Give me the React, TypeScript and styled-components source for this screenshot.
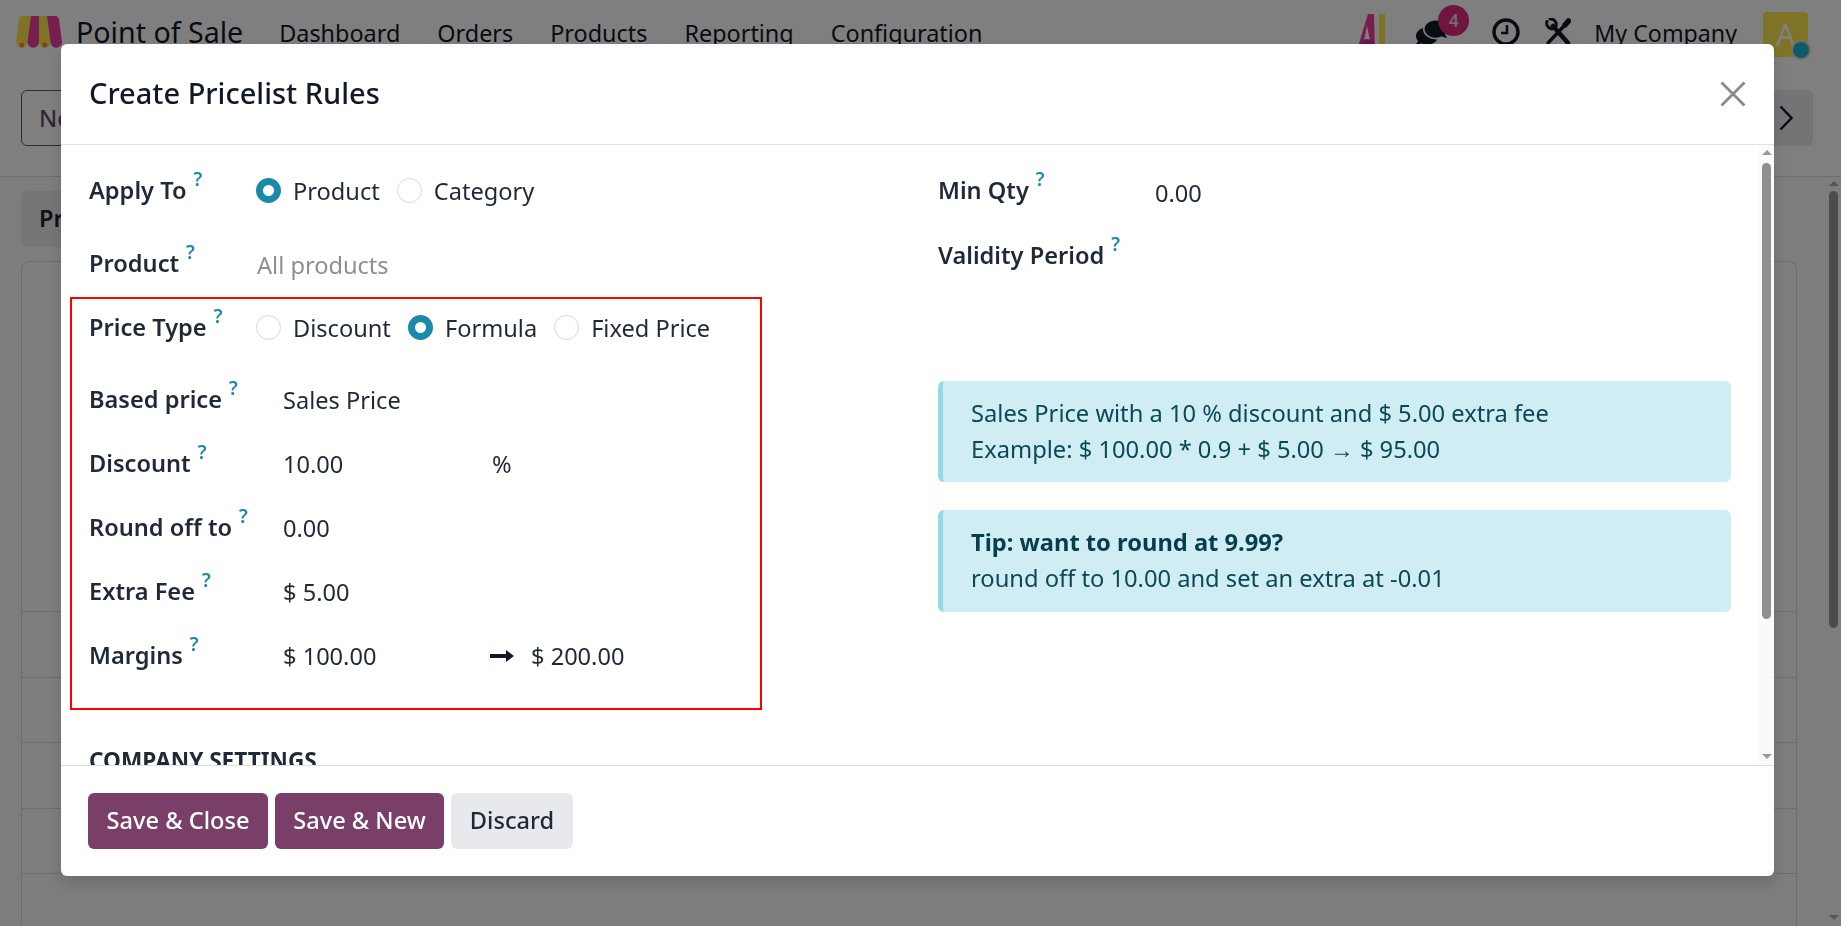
import React from "react";
import styled, { createGlobalStyle } from "styled-components";
import { FaComments } from "react-icons/fa";

const Global = createGlobalStyle`
  html, body { margin: 0; height: 100%; overflow: hidden; }
  body { font-family: "Noto Sans", "Open Sans", sans-serif; color: #1b2230; }
  * { box-sizing: border-box; }
`;

const Page = styled.div`
  width: 1841px; height: 926px; display: flex; flex-direction: column;
  background: #f9fafb; overflow: hidden;
`;
const Nav = styled.header`
  height: 70px; flex: none; display: flex; align-items: center;
  padding: 0 33px 2px 16px; background: #fff;
`;
const Brand = styled.span`
  font-size: 28.6px; line-height: 36px; margin: -4px 36px 0 14px; color: #111827;
`;
const NavItem = styled.span`
  font-size: 23.4px; line-height: 32px; margin: -2px 37px 0 0; color: #111827; white-space: nowrap;
`;
const NavSpacer = styled.div` flex: 1; `;
const NavIcon = styled.span`
  position: relative; display: flex; margin-left: ${(p: { $ml: number }) => p.$ml}px; color: #111827;
`;
const Badge = styled.span`
  position: absolute; left: 22px; top: -15px; width: 31px; height: 31px; border-radius: 50%;
  background: #e02a80; color: #ddd; font-size: 17px; font-weight: 600;
  display: flex; align-items: center; justify-content: center;
`;
const CompanyName = styled.span` font-size: 23.2px; line-height: 32px; margin: -2px 0 0 23px; color: #111827; `;
const Avatar = styled.span`
  position: relative; width: 45px; height: 45px; margin-left: 26px; border-radius: 4px; background: #ffe64a;
  color: #fff; font-size: 30px; display: flex; align-items: center; justify-content: center;
`;
const AvatarDot = styled.span`
  position: absolute; right: -3px; bottom: -3px; width: 20px; height: 20px; border-radius: 50%;
  background: #1cb4cc; border: 2px solid #ddd;
`;
const ControlPanel = styled.div`
  height: 107px; flex: none; display: flex; align-items: flex-start; justify-content: space-between;
  padding: 20px 28px 0 21px; border-bottom: 1px solid #d8dadd; background: #fff;
`;
const NewButton = styled.div`
  width: 80px; height: 56px; border: 1.5px solid #714b67; border-radius: 6px; font-size: 23.5px; font-weight: 500;
  display: flex; align-items: center; padding-left: 17px; color: #714b67;
`;
const PagerButton = styled.div`
  width: 80px; height: 56px; border-radius: 6px; background: #e7e9ed; display: flex; align-items: center;
  justify-content: flex-end; padding-right: 20px;
`;
const Main = styled.div` flex: 1; display: flex; min-height: 0; `;
const MainColumn = styled.div`
  flex: 1; padding: 14px 29px 0 21px; display: flex; flex-direction: column; min-width: 0;
`;
const Tab = styled.div`
  width: 160px; height: 56px; flex: none; border-radius: 6px; background: #ecedef; font-size: 23.5px; font-weight: 600;
  padding: 11px 18px; margin-bottom: 14px;
`;
const Card = styled.div`
  flex: 1; border: 1px solid #d8dadd; border-bottom: 0; border-radius: 8px 8px 0 0; padding-top: 349px;
`;
const CardRow = styled.div` height: 65.5px; border-top: 1px solid #d8dadd; `;
const PageScroll = styled.div`
  width: 15px; flex: none; display: flex; flex-direction: column; align-items: center; padding: 4px 0 6px;
`;
const Arrow = styled.span<{ $down?: boolean; $color: string }>`
  width: 0; height: 0; flex: none;
  border-left: 5px solid transparent; border-right: 5px solid transparent;
  ${(p) => (p.$down ? `border-top: 5px solid ${p.$color};` : `border-bottom: 5px solid ${p.$color};`)}
`;
const PageThumb = styled.div`
  width: 9px; height: 437px; margin-top: 5px; border-radius: 5px; background: #97999d;
`;
const Grow = styled.div` flex: 1; `;

const Backdrop = styled.div`
  position: fixed; inset: 0; background: rgba(0,0,0,.5); padding: 44px 0 0 61px;
`;
const Modal = styled.div`
  width: 1713px; height: 832px; background: #fff; border-radius: 6px; display: flex; flex-direction: column;
  overflow: hidden; box-shadow: 0 8px 16px rgba(0,0,0,.13);
`;
const ModalHeader = styled.div`
  height: 101px; flex: none; display: flex; align-items: center; justify-content: space-between;
  padding: 0 28px; border-bottom: 1px solid #dee2e6;
`;
const Title = styled.h4`
  margin: -3px 0 0; font-size: 29px; font-weight: 500; color: #111827;
`;
const ModalBody = styled.div`
  height: 620px; flex: none; display: flex; min-height: 0;
`;
const Form = styled.div`
  flex: 1; min-width: 0; overflow: hidden; padding: 14px 28px 0;
  display: grid; grid-template-columns: 849px 1fr; align-content: start;
`;
const Column = styled.div` display: flex; flex-direction: column; min-width: 0; `;
const Row = styled.div<{ $h: number; $pt?: number; $mb?: number }>`
  height: ${(p) => p.$h}px; padding-top: ${(p) => p.$pt || 0}px; margin-bottom: ${(p) => p.$mb || 0}px;
  display: flex; align-items: center; flex: none;
`;
const LabelCell = styled.div<{ $w: number }>`
  width: ${(p) => p.$w}px; flex: none; font-size: 23.6px; line-height: 30px; font-weight: 600; color: #1f2937; white-space: nowrap;
  display: flex; align-items: center; margin-top: -2px;
`;
const Help = styled.sup`
  font-size: 19px; font-weight: 600; color: #1a8ca8; margin-left: 7px; line-height: 1; align-self: flex-start; margin-top: -5px;
`;
const RadioOption = styled.label`
  display: flex; align-items: center; gap: 12px; font-size: 23.6px; line-height: 30px; color: #1f2937; margin-right: 17px; white-space: nowrap; margin-top: -1px;
`;
const Radio = styled.span<{ $on?: boolean }>`
  width: 25px; height: 25px; flex: none; border-radius: 50%; background: #fff;
  border: ${(p) => (p.$on ? "7px solid #1a8aa8" : "1px solid #d5d9dd")};
`;
const Value = styled.span<{ $w?: number; $muted?: boolean; $dy?: number }>`
  font-size: 23.6px; line-height: 30px; color: ${(p) => (p.$muted ? "#8f8f8f" : "#1f2937")}; white-space: nowrap;
  ${(p) => (p.$w ? `width: ${p.$w}px; flex: none;` : "")}
  ${(p) => (p.$dy ? `margin-top: ${p.$dy}px;` : "")}
`;
const ArrowIcon = styled.svg` flex: none; margin-right: 17px; `;
const Highlight = styled.div`
  width: 692px; height: 413px; margin-left: -19px; padding: 0 17px; border: 2px solid #f00; flex: none;
`;
const SectionTitle = styled.div`
  margin-top: 36px; font-size: 22.6px; line-height: 30px; font-weight: 700; color: #1f2937; text-transform: uppercase;
`;
const Alert = styled.div<{ $mt: number; $h: number }>`
  margin-top: ${(p) => p.$mt}px; height: ${(p) => p.$h}px; flex: none;
  background: #cfedf3; border-left: 5px solid #93d9e6; border-radius: 6px; padding: 14px 28px;
  font-size: 23.7px; line-height: 36px; color: #0a4a58; white-space: nowrap;
`;
const Strong = styled.div` font-weight: 700; color: #053f4d; `;
const ModalScroll = styled.div`
  width: 15px; flex: none; background: #fafafa; display: flex; flex-direction: column; align-items: center; padding: 5px 0 6px;
`;
const ModalThumb = styled.div`
  width: 9px; height: 456px; margin-top: 8px; border-radius: 5px; background: #8f8f8f;
`;
const Footer = styled.div`
  flex: 1; border-top: 1px solid #dee2e6; padding: 27px 27px; display: flex; gap: 7px; align-items: flex-start;
`;
const Button = styled.button<{ $w: number; $primary?: boolean }>`
  width: ${(p) => p.$w}px; height: 56px; border: 0; padding: 0 0 2px; border-radius: 6px; font: inherit; font-size: 23.6px; font-weight: 500;
  background: ${(p) => (p.$primary ? "#7a3f68" : "#e7e9ed")}; color: ${(p) => (p.$primary ? "#fff" : "#1f2937")};
`;
const CloseButton = styled.svg` flex: none; `;

const Logo = () => (
  <svg width="46" height="32" viewBox="0 0 46 32" style={{ flex: "none", marginTop: "-4px" }}>
    <path d="M6 0h9L11.5 26a5.75 5.75 0 0 1-11.5 0L3 3a3.5 3.5 0 0 1 3-3z" fill="#ffe84a" />
    <path d="M15 0h8v26a5.75 5.75 0 0 1-11.5 0z" fill="#ee3c9e" />
    <path d="M23 0h8l3.5 26a5.75 5.75 0 0 1-11.5 0z" fill="#ffe84a" />
    <path d="M31 0h9a3.5 3.5 0 0 1 3 3l3 23a5.75 5.75 0 0 1-11.5 0z" fill="#ee3c9e" />
    <circle cx="5.75" cy="29" r="2.5" fill="#ff8a2a" /><circle cx="28.75" cy="29" r="2.5" fill="#ff8a2a" />
  </svg>
);
const AiIcon = () => (
  <svg width="30" height="44" viewBox="0 0 30 44">
    <path d="M11 2h6l1 36H0z" fill="#ee3c9e" />
    <path d="M10 14l5 24H5z" fill="#fff" />
    <rect x="22" y="2" width="6" height="36" fill="#ffe84a" />
    <circle cx="10" cy="36" r="9" fill="#c8349a" />
  </svg>
);
const ClockIcon = () => (
  <svg width="28" height="28" viewBox="0 0 28 28" fill="none" stroke="#111827" strokeWidth="3.4" style={{ marginTop: "-4px" }}>
    <circle cx="14" cy="14" r="12" /><path d="M15 7v8H9" strokeWidth="2.6" />
  </svg>
);
const ToolsIcon = () => (
  <svg width="26" height="28" viewBox="0 0 26 28" fill="none" stroke="#111827" style={{ marginTop: "-4px" }}>
    <path d="M8 8l15 17" strokeWidth="4.5" strokeLinecap="round" />
    <path d="M2 3.5a5.5 5.5 0 0 0 8 6.5M5 1a5.5 5.5 0 0 1 6 7" strokeWidth="3" strokeLinecap="round" />
    <path d="M19 8L3 25" strokeWidth="3.4" strokeLinecap="round" />
    <path d="M20 7l3.5-4" strokeWidth="5.5" strokeLinecap="round" />
  </svg>
);
const Chevron = () => (
  <svg width="14" height="26" viewBox="0 0 14 26" fill="none" stroke="#111827" strokeWidth="2.4">
    <path d="M1.5 1.5L12.5 13 1.5 24.5" />
  </svg>
);
const BoldArrow = () => (
  <ArrowIcon width="24" height="14" viewBox="0 0 24 14">
    <path d="M0 5h16V1L24 7l-8 6V9H0z" fill="#111827" />
  </ArrowIcon>
);

const Label = ({ w, children }: { w: number; children: React.ReactNode }) => (
  <LabelCell $w={w}>{children}<Help>?</Help></LabelCell>
);
const Option = ({ on, children }: { on?: boolean; children: React.ReactNode }) => (
  <RadioOption><Radio $on={on} />{children}</RadioOption>
);

export default function App() {
  return (
    <>
      <Global />
      <Page>
        <Nav>
          <Logo />
          <Brand>Point of Sale</Brand>
          {["Dashboard", "Orders", "Products", "Reporting", "Configuration"].map((t) => (
            <NavItem key={t}>{t}</NavItem>
          ))}
          <NavSpacer />
          <NavIcon $ml={0}><AiIcon /></NavIcon>
          <NavIcon $ml={29}><FaComments size={31} style={{ transform: "scaleX(-1)", marginTop: "-3px" }} /><Badge>4</Badge></NavIcon>
          <NavIcon $ml={45}><ClockIcon /></NavIcon>
          <NavIcon $ml={25}><ToolsIcon /></NavIcon>
          <CompanyName>My Company</CompanyName>
          <Avatar>A<AvatarDot /></Avatar>
        </Nav>
        <ControlPanel>
          <NewButton>New</NewButton>
          <PagerButton><Chevron /></PagerButton>
        </ControlPanel>
        <Main>
          <MainColumn>
            <Tab>Products</Tab>
            <Card>
              <CardRow /><CardRow /><CardRow /><CardRow /><CardRow />
            </Card>
          </MainColumn>
          <PageScroll>
            <Arrow $color="#a9abad" />
            <PageThumb />
            <Grow />
            <Arrow $down $color="#a9abad" />
          </PageScroll>
        </Main>
      </Page>
      <Backdrop>
        <Modal>
          <ModalHeader>
            <Title>Create Pricelist Rules</Title>
            <CloseButton width="26" height="26" viewBox="0 0 26 26" fill="none" stroke="#8a8a8a" strokeWidth="2.8">
              <path d="M1.5 1.5l23 23M24.5 1.5l-23 23" />
            </CloseButton>
          </ModalHeader>
          <ModalBody>
            <Form>
              <Column>
                <Row $h={64}>
                  <Label w={167}>Apply To</Label>
                  <Option on>Product</Option>
                  <Option>Category</Option>
                </Row>
                <Row $h={74} $pt={8}>
                  <Label w={168}>Product</Label>
                  <Value $muted $dy={2}>All products</Value>
                </Row>
                <Highlight>
                  <Row $h={58} $mb={11}>
                    <Label w={167}>Price Type</Label>
                    <Option>Discount</Option>
                    <Option on>Formula</Option>
                    <Option>Fixed Price</Option>
                  </Row>
                  <Row $h={64}><Label w={194}>Based price</Label><Value>Sales Price</Value></Row>
                  <Row $h={64}><Label w={194}>Discount</Label><Value $w={209}>10.00</Value><Value>%</Value></Row>
                  <Row $h={64}><Label w={194}>Round off to</Label><Value>0.00</Value></Row>
                  <Row $h={64}><Label w={194}>Extra Fee</Label><Value>$ 5.00</Value></Row>
                  <Row $h={64}><Label w={194}>Margins</Label><Value $w={207}>$ 100.00</Value><BoldArrow /><Value>$ 200.00</Value></Row>
                </Highlight>
                <SectionTitle>Company Settings</SectionTitle>
              </Column>
              <Column>
                <Row $h={64}><Label w={217}>Min Qty</Label><Value $dy={3}>0.00</Value></Row>
                <Row $h={65}><Label w={217}>Validity Period</Label></Row>
                <Alert $mt={93} $h={101}>
                  Sales Price with a 10 % discount and $ 5.00 extra fee<br />
                  Example: $ 100.00 * 0.9 + $ 5.00 → $ 95.00
                </Alert>
                <Alert $mt={28} $h={102}>
                  <Strong>Tip: want to round at 9.99?</Strong>
                  round off to 10.00 and set an extra at -0.01
                </Alert>
              </Column>
            </Form>
            <ModalScroll>
              <Arrow $color="#9a9a9a" />
              <ModalThumb />
              <Grow />
              <Arrow $down $color="#9a9a9a" />
            </ModalScroll>
          </ModalBody>
          <Footer>
            <Button $primary $w={180}>Save &amp; Close</Button>
            <Button $primary $w={169}>Save &amp; New</Button>
            <Button $w={122}>Discard</Button>
          </Footer>
        </Modal>
      </Backdrop>
    </>
  );
}
